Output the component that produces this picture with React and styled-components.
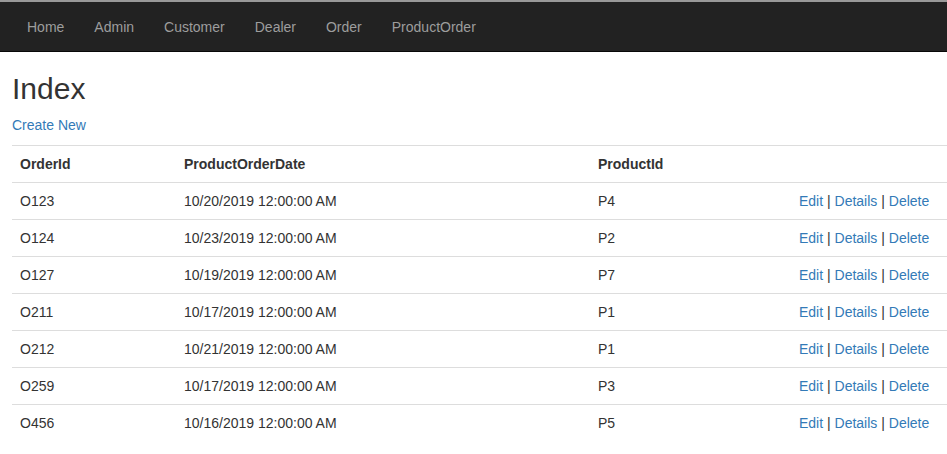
import React from 'react';
import styled, { createGlobalStyle } from 'styled-components';

const GlobalStyle = createGlobalStyle`
  html, body {
    margin: 0;
    padding: 0;
    background: #fff;
  }

  body {
    font-family: "Liberation Sans", Arial, Helvetica, sans-serif;
    font-size: 14px;
    line-height: 20px;
    color: #333;
  }
`;

const NavBar = styled.nav`
  display: flex;
  align-items: center;
  height: 49px;
  padding: 0 12px;

  background-color: #222;
  border-top: 2px solid #999;
  border-bottom: 1px solid #080808;
`;

const NavList = styled.ul`
  display: flex;
  margin: 0;
  padding: 0;
  list-style: none;
`;

const NavLink = styled.a`
  display: block;
  padding: 15px 15px 14px;
  line-height: 20px;
  color: #9d9d9d;
  text-decoration: none;
`;

const Body = styled.main`
  padding: 0 0 0 12px;
`;

const Title = styled.h2`
  margin: 20px 0 10px;
  font-size: 30px;
  font-weight: 500;
  line-height: 33px;
`;

const Para = styled.p`
  margin: 0 0 10px;
`;

const Link = styled.a`
  color: #337ab7;
  text-decoration: none;
`;

const Table = styled.table`
  width: 100%;
  border-collapse: collapse;
  border-spacing: 0;
  table-layout: fixed;
`;

const Th = styled.th`
  box-sizing: border-box;
  width: ${props => props.width || 'auto'};
  padding: 8px;
  text-align: left;
  font-weight: bold;
  line-height: 20px;
  border-top: 1px solid #ddd;
`;

const Td = styled.td`
  padding: 8px;
  line-height: 20px;
  border-top: 1px solid #ddd;
  white-space: nowrap;
`;

const ORDERS = [
  { id: 'O123', date: '10/20/2019 12:00:00 AM', product: 'P4' },
  { id: 'O124', date: '10/23/2019 12:00:00 AM', product: 'P2' },
  { id: 'O127', date: '10/19/2019 12:00:00 AM', product: 'P7' },
  { id: 'O211', date: '10/17/2019 12:00:00 AM', product: 'P1' },
  { id: 'O212', date: '10/21/2019 12:00:00 AM', product: 'P1' },
  { id: 'O259', date: '10/17/2019 12:00:00 AM', product: 'P3' },
  { id: 'O456', date: '10/16/2019 12:00:00 AM', product: 'P5' },
];

const MENU = ['Home', 'Admin', 'Customer', 'Dealer', 'Order', 'ProductOrder'];

const App = () => (
  <>
    <GlobalStyle />
    <NavBar>
      <NavList>
        {MENU.map(item => (
          <li key={item}>
            <NavLink href="#">{item}</NavLink>
          </li>
        ))}
      </NavList>
    </NavBar>

    <Body>
      <Title>Index</Title>
      <Para>
        <Link href="#">Create New</Link>
      </Para>

      <Table>
        <thead>
          <tr>
            <Th width="164px">OrderId</Th>
            <Th width="414px">ProductOrderDate</Th>
            <Th width="201px">ProductId</Th>
            <Th />
          </tr>
        </thead>
        <tbody>
          {ORDERS.map(order => (
            <tr key={order.id}>
              <Td>{order.id}</Td>
              <Td>{order.date}</Td>
              <Td>{order.product}</Td>
              <Td>
                <Link href="#">Edit</Link>
                {' | '}
                <Link href="#">Details</Link>
                {' | '}
                <Link href="#">Delete</Link>
              </Td>
            </tr>
          ))}
        </tbody>
      </Table>
    </Body>
  </>
);

export default App;
